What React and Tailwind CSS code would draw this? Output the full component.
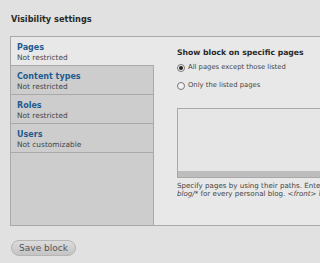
export default function App() {
  const tabs = [
    { t: "Pages", s: "Not restricted", sel: true },
    { t: "Content types", s: "Not restricted" },
    { t: "Roles", s: "Not restricted" },
    { t: "Users", s: "Not customizable" },
  ];
  return (
    <div
      className="w-[320px] h-[263px] overflow-hidden bg-[#e1e1e1] text-[#333]"
      style={{ fontFamily: '"DejaVu Sans", Verdana, sans-serif' }}
    >
      <div className="h-[36px] pl-[11px] pt-[14px] text-[8.2px] font-bold leading-[11px] text-[#2a2a2a]">
        Visibility settings
      </div>
      <div className="ml-[10px] flex h-[190px] border-y border-l border-[#a9a9a9]">
        <div className="flex w-[143px] shrink-0 flex-col bg-[#cdcdcd]">
          {tabs.map((tb) => (
            <div
              key={tb.t}
              className={
                "h-[29px] border-b border-[#a9a9a9] pl-[6px] pt-[6px] " +
                (tb.sel ? "bg-[#e8e8e8]" : "border-r")
              }
            >
              <div className="text-[8px] font-bold leading-[10px] text-[#1d5b8e]">{tb.t}</div>
              <div className="text-[7.4px] leading-[9px] text-[#444]">{tb.s}</div>
            </div>
          ))}
          <div className="flex-1 border-r border-[#a9a9a9]" />
        </div>
        <div className="min-w-0 flex-1 overflow-hidden bg-[#e8e8e8] pl-[23px] pt-[11px]">
          <div className="whitespace-nowrap text-[7.7px] font-bold leading-[10px] text-[#2a2a2a]">
            Show block on specific pages
          </div>
          <div className="mt-[5px] flex items-center gap-[3px] whitespace-nowrap text-[6.8px] leading-[9px] text-[#444]">
            <span className="flex h-[8px] w-[8px] shrink-0 items-center justify-center rounded-full border border-[#777] bg-[#f3f3f3]">
              <span className="h-[4px] w-[4px] rounded-full bg-[#222]" />
            </span>
            All pages except those listed
          </div>
          <div className="mt-[9px] flex items-center gap-[3px] whitespace-nowrap text-[6.8px] leading-[9px] text-[#444]">
            <span className="h-[8px] w-[8px] shrink-0 rounded-full border border-[#777] bg-[#f3f3f3]" />
            Only the listed pages
          </div>
          <div className="mt-[18px] flex h-[70px] w-[200px] flex-col border border-[#a9a9a9] bg-[#e6e6e6]">
            <div className="flex-1" />
            <div className="h-[6px] bg-[#bdbdbd]" />
          </div>
          <div className="mt-[4px] w-[200px] whitespace-nowrap text-[7.1px] leading-[8px] text-[#444]">
            <div>Specify pages by using their paths. Enter one path per line.</div>
            <div>
              <i>blog/*</i> for every personal blog. <i>&lt;front&gt;</i> is the front page.
            </div>
          </div>
        </div>
      </div>
      <div className="pl-[11px] pt-[8px]">
        <button className="h-[16px] w-[65px] rounded-full border border-[#b5b5b5] bg-gradient-to-b from-[#dcdcdc] to-[#c4c4c4] text-[9px] leading-[14px] text-[#555]">
          Save block
        </button>
      </div>
    </div>
  );
}
